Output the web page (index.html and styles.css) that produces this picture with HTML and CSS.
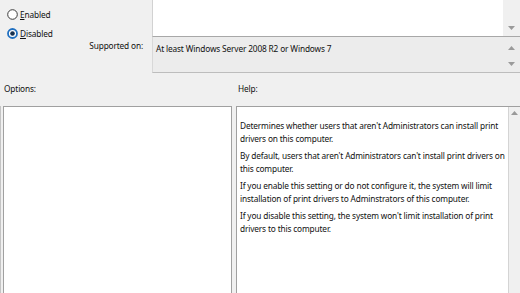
FILE: index.html
```html
<!DOCTYPE html>
<html>
<head>
<meta charset="utf-8">
<link rel="stylesheet" href="styles.css">
</head>
<body>
<div class="dialog">
  <div class="top">
    <div class="radios">
      <div class="radio">
        <svg class="rb" width="11" height="11" viewBox="0 0 11 11"><circle cx="5.5" cy="5.5" r="4.8" fill="#fff" stroke="#3a3a3a" stroke-width="1"/></svg>
        <span><u>E</u>nabled</span>
      </div>
      <div class="radio">
        <svg class="rb" width="11" height="11" viewBox="0 0 11 11"><circle cx="5.5" cy="5.5" r="4.5" fill="#fff" stroke="#1f6fc0" stroke-width="1.8"/><circle cx="5.5" cy="5.5" r="2.3" fill="#15304f"/></svg>
        <span><u>D</u>isabled</span>
      </div>
    </div>
    <div class="comment">
      <div class="comment-body"></div>
      <div class="sbar sbar-end">
        <svg width="7" height="4" viewBox="0 0 7 4"><path d="M0 0h7L3.5 4z" fill="#9a9a9a"/></svg>
      </div>
    </div>
    <div class="sup-label">Supported on:</div>
    <div class="supported">
      <div class="sup-text">At least Windows Server 2008 R2 or Windows 7</div>
      <div class="sbar sbar-both">
        <svg width="7" height="4" viewBox="0 0 7 4"><path d="M0 4h7L3.5 0z" fill="#9a9a9a"/></svg>
        <svg width="7" height="4" viewBox="0 0 7 4"><path d="M0 0h7L3.5 4z" fill="#9a9a9a"/></svg>
      </div>
    </div>
  </div>
  <div class="labels">
    <div class="lbl">Options:</div>
    <div class="lbl">Help:</div>
  </div>
  <div class="panes">
    <div class="edge"></div>
    <div class="options"></div>
    <div class="help">
      <div class="help-text">
        <p>Determines whether users that aren't Administrators can install print drivers on this computer.</p>
        <p>By default, users that aren't Administrators can't install print drivers on this computer.</p>
        <p>If you enable this setting or do not configure it, the system will limit installation of print drivers to Adminstrators of this computer.</p>
        <p>If you disable this setting, the system won't limit installation of print drivers to this computer.</p>
      </div>
      <div class="sbar sbar-start">
        <svg width="7" height="4" viewBox="0 0 7 4"><path d="M0 4h7L3.5 0z" fill="#9a9a9a"/></svg>
      </div>
    </div>
  </div>
</div>
</body>
</html>
```

FILE: styles.css
```css
html, body {
  margin: 0;
  padding: 0;
  background: #f0f0f0;
  width: 520px;
  height: 293px;
  overflow: hidden;
}
.dialog {
  font-family: "Noto Sans", "Open Sans", sans-serif;
  font-size: 8.3px;
  letter-spacing: -0.15px;
  color: #111;
  width: 520px;
  height: 293px;
}
.top {
  display: grid;
  grid-template-columns: 152px 1fr;
  grid-template-rows: 37px 36px;
}
.radios {
  display: grid;
  grid-template-rows: 19px 19px;
  align-content: start;
  padding: 5px 0 0 7px;
}
.radio {
  display: flex;
  align-items: center;
  gap: 2px;
}
.rb { flex: none; }
.comment {
  display: flex;
  background: #fff;
  border-left: 1px solid #d2d2d2;
  border-bottom: 1px solid #a8a8a8;
}
.comment-body { flex: 1; }
.sbar {
  width: 17px;
  background: #f0f0f0;
  display: flex;
  flex-direction: column;
  align-items: center;
  flex: none;
}
.sbar-end { justify-content: flex-end; padding-bottom: 6px; box-sizing: border-box; }
.sbar-both { justify-content: space-between; padding: 9px 0 6px; box-sizing: border-box; background: transparent; }
.sbar-start { justify-content: flex-start; padding-top: 4px; box-sizing: border-box; width: 11px; }
.sup-label {
  text-align: right;
  padding: 2px 9px 0 0;
  line-height: 13px;
}
.supported {
  display: flex;
  background: #ececec;
  border-left: 1px solid #d8d8d8;
  border-bottom: 1px solid #bdbdbd;
}
.sup-text {
  flex: 1;
  padding: 5px 0 0 3px;
  line-height: 13px;
}
.labels {
  display: grid;
  grid-template-columns: 234px 1fr;
  height: 33px;
  align-items: start;
  padding-top: 9px;
  box-sizing: border-box;
  line-height: 13px;
}
.lbl { padding-left: 4px; }
.panes {
  display: flex;
  height: 187px;
}
.edge {
  width: 1px;
  margin: 0 2px 0 0;
  background: #c4c4c4;
}
.options {
  width: 227px;
  background: #fff;
  border: 1px solid #a0a0a0;
  border-bottom: none;
  margin-right: 4px;
}
.help {
  flex: 1;
  display: flex;
  border: 1px solid #a0a0a0;
  border-right: none;
  border-bottom: none;
  background: #f0f0f0;
}
.help-text {
  flex: 1;
  background: #fff;
  border-right: 1px solid #d4d4d4;
  padding: 12px 0 0 3px;
  line-height: 13px;
}
.help-text p {
  margin: 0 0 4px;
}
```
